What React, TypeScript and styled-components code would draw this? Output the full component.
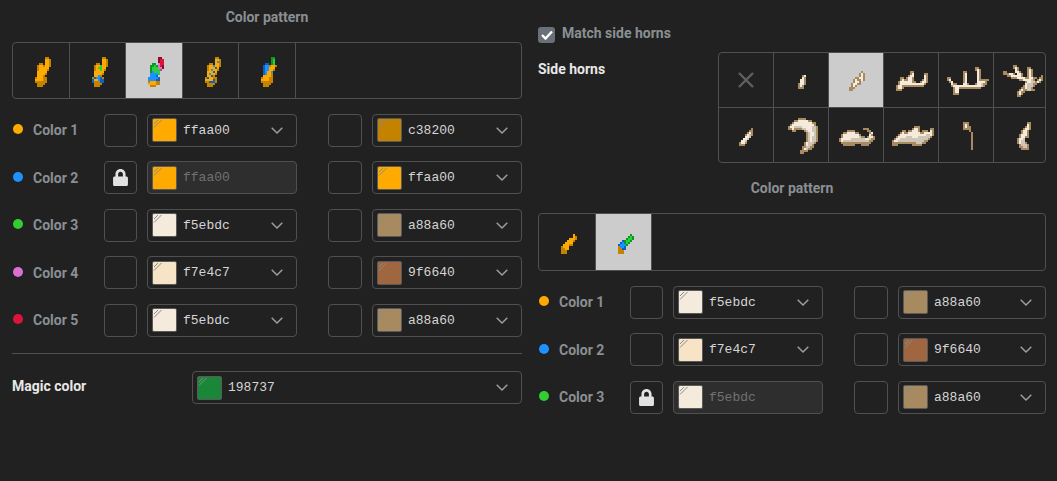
import React from 'react';
import styled, { createGlobalStyle } from 'styled-components';
import { FaLock } from 'react-icons/fa';

const GlobalStyle = createGlobalStyle`
  html, body {
    margin: 0;
    padding: 0;
    background: #212121;
  }
`;

// pixel art palette
const PALETTE: Record<string, string> = {
  o: '#ffaa00',
  d: '#c38200',
  b: '#1e90ff',
  B: '#0b62c4',
  g: '#2ecc40',
  G: '#0a9a1a',
  p: '#e070d0',
  P: '#a84aa0',
  r: '#dc143c',
  R: '#8f0a2c',
  l: '#f5ebdc',
  m: '#cfc6b8',
  a: '#a88a60',
};

interface SpriteData {
  dx: number;
  dy: number;
  rows: string[];
}

const PATTERN_HORNS: SpriteData[] = [
  {
    dx: 22,
    dy: 14,
    rows: [
      '.....dd.',
      '.....ood',
      '.....ood',
      '..dd.ood',
      '.doodood',
      '.dooooo.',
      '.dooood.',
      '.ooooo..',
      '.ooood..',
      '.oood...',
      'dooodd..',
      'oooodd..',
      'dddddd..',
      '.dddd...',
      '.ddd....',
    ],
  },
  {
    dx: 22,
    dy: 14,
    rows: [
      '.....dd.',
      '.....ood',
      '.....ood',
      '..dd.ood',
      '.doogood',
      '.doggoo.',
      '.doogod.',
      '.ooooo..',
      '.ooood..',
      '.oobd...',
      'dBbbBd..',
      'BoobBB..',
      'BdddBB..',
      '.dddd...',
      '.ddd....',
    ],
  },
  {
    dx: 22,
    dy: 14,
    rows: [
      '.....RR.',
      '.....Rrr',
      '.....Rrr',
      '..GG.prr',
      '.GGgGprR',
      '.GgggppR',
      '.GggggP.',
      '.Gbggg..',
      '.bbbbg..',
      '.bbbB...',
      'bbbbbB..',
      'bbbbBB..',
      'dooodd..',
      'oooodd..',
      '.ddd....',
    ],
  },
  {
    dx: 22,
    dy: 14,
    rows: [
      '.....dd.',
      '.....ood',
      '.....obd',
      '..dd.ood',
      '.doobood',
      '.doooBo.',
      '.dobood.',
      '.oooBo..',
      '.obood..',
      '.ooBd...',
      'dBoodd..',
      'ooooBd..',
      'ddBBBd..',
      '.dddd...',
      '.ddd....',
    ],
  },
  {
    dx: 22,
    dy: 14,
    rows: [
      '.....GG.',
      '.....Gg.',
      '.....Gg.',
      '..BB.Gg.',
      '.Bbbdood',
      '.Bbbooo.',
      '.Bbbood.',
      '.Bboob..',
      '.Bbood..',
      '.ooood..',
      'dooodd..',
      'oooodd..',
      'dddddd..',
      '.dddd...',
      '.ddd....',
    ],
  },
];

const SMALL_PATTERN_HORNS: SpriteData[] = [
  {
    dx: 22,
    dy: 20,
    rows: [
      '......o.',
      '......od',
      '....oood',
      '...oood.',
      '..oooo..',
      '.ooodd..',
      'dooo....',
      'ddoo....',
      'ddd.....',
      'ddd.....',
    ],
  },
  {
    dx: 22,
    dy: 20,
    rows: [
      '......G.',
      '.....GgG',
      '....GggG',
      '..BGggG.',
      '.BbGgG..',
      'BbbbG...',
      'dbbB....',
      'ddBB....',
      'ddd.....',
      'ddd.....',
    ],
  },
];

const SIDE_HORNS: (SpriteData | null)[] = [
  null,
  {
    dx: 24,
    dy: 22,
    rows: ['..al', '..la', '.lla', '.lla', 'alla', 'ala.', 'aaa.'],
  },
  {
    dx: 20,
    dy: 18,
    rows: [
      '......a.',
      '.....ala',
      '.....ala',
      '...aalla',
      '..alaala',
      '..alla..',
      '.allaa..',
      '.ala....',
      'aaa.....',
      'aa......',
    ],
  },
  {
    dx: 12,
    dy: 18,
    rows: [
      '.......aa.......',
      '.......al.....aa',
      '......all.....la',
      '..aa.alla.....la',
      '..alaalla....ala',
      '.allllllaa..alla',
      '.alllllllllllla.',
      'allaaaaaaaaaaa..',
      'alla............',
      'aaa.............',
    ],
  },
  {
    dx: 8,
    dy: 14,
    rows: [
      '..............aa.....',
      '..............ala....',
      '........aa.....la....',
      '........al.....la....',
      '........al.....la....',
      'aa......al.....la....',
      'al......al.....laaaaa',
      '.al.....al.....lllla.',
      '..laa...lla...allmaa.',
      '..allllllllllllllma..',
      '...allaaaaaaaaaaa....',
      '...all...............',
      '...all...............',
      '...aaa...............',
    ],
  },
  {
    dx: 8,
    dy: 12,
    rows: [
      '.....aa.............',
      '.....ala....aa......',
      '......la....ala.....',
      'aa....lla...ala.....',
      'aaalla.lla..ala.....',
      '..aallllla..ala....a',
      '....aaallllaallaa.aa',
      '........aallllma.ala',
      '...........allmmala.',
      '...........lmmmaa...',
      '..........almmma....',
      '.........aalmma.....',
      '........alaammaa....',
      '.......alaa.........',
      '.......ala..........',
      '.......aa...........',
    ],
  },
  {
    dx: 20,
    dy: 20,
    rows: [
      '......a',
      '.....aa',
      '....ala',
      '...alma',
      '...llm.',
      '..llm..',
      '.llm...',
      'alla...',
      'aaa....',
    ],
  },
  {
    dx: 14,
    dy: 10,
    rows: [
      '.....aaaa......',
      '...aalllllaa...',
      '..alllllllllaa.',
      '.allllllllllla.',
      'allmmmmlllllmma',
      'aalaaaammlllmma',
      '..aa....amllmma',
      '.........amllma',
      '.........amllma',
      '.........amlmma',
      '.........amlmma',
      '.........amlmma',
      '........almmma.',
      '........almma..',
      '.......aammaa..',
      '.......almaa...',
      '......aaaa.....',
      '......aa.......',
    ],
  },
  {
    dx: 10,
    dy: 20,
    rows: [
      '............aaa...',
      '....aaaa......aa..',
      '..aallllaa.....al.',
      '.alllllllla....la.',
      '.allllllllmaa.alla',
      'alllllmmmmmmmllmaa',
      'almmmmmmmmmmmmmaa.',
      '.aaaaaaaaaaaaaaa..',
      '..aaaaaa...aaaa...',
    ],
  },
  {
    dx: 8,
    dy: 18,
    rows: [
      '...........aaa.......',
      '..........alla.....aa',
      '.....aa.aallla.aaa.la',
      '....alaallllllaalllla',
      '...alllllllllllllmmla',
      '..allllmmmlllmmmmmma.',
      '.allmmmmmmmmmmmmmma..',
      'allmmmmmmmmmmmmmaa...',
      'aaaaaaaaaaaammmaa....',
      'aaa.......aaaaa......',
    ],
  },
  {
    dx: 24,
    dy: 14,
    rows: [
      'aaa..',
      'ala..',
      'alaa.',
      'aaaa.',
      '...a.',
      '....a',
      '....a',
      '....a',
      '....a',
      '....a',
      '....a',
      '....a',
      '....a',
      '....a',
    ],
  },
  {
    dx: 22,
    dy: 14,
    rows: [
      '.....aa',
      '.....la',
      '....ala',
      '...alla',
      '..alla.',
      '..alla.',
      '.allla.',
      '.allaa.',
      'allm...',
      'almm...',
      'almma..',
      '.ammma.',
      '.aamma.',
      '..aaaa.',
    ],
  },
];

const Sprite: React.FC<{ data: SpriteData; width: number; height: number }> = ({ data, width, height }) => (
  <svg width={width} height={height} viewBox={`0 0 ${width} ${height}`} shapeRendering="crispEdges">
    {data.rows.map((row, y) =>
      row.split('').map((ch, x) =>
        ch === '.' ? null : (
          <rect key={`${x}-${y}`} x={data.dx + x * 2} y={data.dy + y * 2} width={2} height={2} fill={PALETTE[ch]} />
        ),
      ),
    )}
  </svg>
);

const Page = styled.div`
  width: 1057px;
  height: 481px;
  box-sizing: border-box;
  padding: 9px 11px 0 12px;
  display: flex;
  gap: 16px;
  background: #212121;
  font-family: Roboto, 'Liberation Sans', sans-serif;
  overflow: hidden;
`;

const Column = styled.div<{ $width: number }>`
  width: ${(p) => p.$width}px;
  flex: none;
  display: flex;
  flex-direction: column;
`;

const Title = styled.div<{ $top?: number }>`
  height: 17px;
  line-height: 17px;
  margin-top: ${(p) => p.$top ?? 0}px;
  margin-bottom: 16px;
  font-size: 14px;
  font-weight: 700;
  color: #8a8f94;
  text-align: center;
`;

const CellGrid = styled.div<{ $cols: number; $cell: number }>`
  display: grid;
  grid-template-columns: repeat(${(p) => p.$cols}, ${(p) => p.$cell}px);
  border: 1px solid #505050;
  border-radius: 4px;
  overflow: hidden;
  box-sizing: border-box;
`;

const SpriteCell = styled.div<{ $selected?: boolean; $h: number; $right?: boolean; $bottom?: boolean }>`
  height: ${(p) => p.$h}px;
  box-sizing: border-box;
  display: flex;
  align-items: center;
  justify-content: center;
  background: ${(p) => (p.$selected ? '#cccccc' : 'transparent')};
  border-right: ${(p) => (p.$right ? '1px solid #505050' : 'none')};
  border-bottom: ${(p) => (p.$bottom ? '1px solid #505050' : 'none')};
`;

const RowList = styled.div`
  margin-top: 14px;
  display: flex;
  flex-direction: column;
  gap: 13.5px;
`;

const ColorRow = styled.div`
  display: flex;
  align-items: center;
  height: 34px;
`;

const ColorName = styled.div`
  width: 92px;
  flex: none;
  display: flex;
  align-items: center;
  gap: 10px;
  font-size: 14px;
  font-weight: 700;
  color: #8a8f94;
`;

const Dot = styled.span<{ $color: string }>`
  width: 10px;
  height: 10px;
  margin-left: 1px;
  margin-top: -2px;
  border-radius: 50%;
  background: ${(p) => p.$color};
`;

const Pair = styled.div`
  width: 193px;
  flex: none;
  display: flex;
  align-items: center;
  gap: 10px;

  & + & {
    flex: 1;
    margin-left: 31px;
  }
`;

const LockBox = styled.div<{ $wide?: boolean }>`
  width: ${(p) => (p.$wide ? 34 : 33)}px;
  height: 33px;
  flex: none;
  box-sizing: border-box;
  border: 1px solid #505050;
  border-radius: 4px;
  display: flex;
  align-items: center;
  justify-content: center;
  color: #e2e2e2;
  font-size: 17px;
`;

const SelectBox = styled.div<{ $disabled?: boolean }>`
  flex: 1;
  height: 33px;
  box-sizing: border-box;
  display: flex;
  align-items: center;
  gap: 6px;
  padding: 0 13px 0 4px;
  border: 1px solid #505050;
  border-radius: 4px;
  background: ${(p) => (p.$disabled ? '#2e2e2e' : 'transparent')};
`;

const Swatch = styled.div<{ $color: string }>`
  position: relative;
  width: 25px;
  height: 24px;
  flex: none;
  box-sizing: border-box;
  border: 1px solid #5a5a5a;
  border-radius: 2px;
  background: ${(p) => p.$color};
`;

const Shine = styled.svg`
  position: absolute;
  left: 0;
  top: 0;
`;

const HexCode = styled.span<{ $disabled?: boolean }>`
  flex: 1;
  font-family: 'Liberation Mono', monospace;
  font-size: 13px;
  color: ${(p) => (p.$disabled ? '#717171' : '#d5d5d5')};
`;

const Divider = styled.div`
  height: 1px;
  margin-top: 16px;
  background: #505050;
`;

const MagicRow = styled.div`
  display: flex;
  align-items: center;
  height: 33px;
  margin-top: 17px;
`;

const MagicLabel = styled.div`
  width: 180px;
  flex: none;
  margin-top: -4px;
  font-size: 14px;
  font-weight: 700;
  color: #e8e8e8;
`;

const CheckRow = styled.div`
  display: flex;
  align-items: flex-start;
  gap: 7px;
  height: 17px;
  margin-top: 16px;
  font-size: 14px;
  font-weight: 700;
  color: #8a8f94;
`;

const CheckBox = styled.div`
  width: 17px;
  height: 16px;
  margin-top: 2px;
  border-radius: 3px;
  background: #6a7078;
  display: flex;
  align-items: center;
  justify-content: center;
`;

const HornSection = styled.div`
  display: flex;
  margin-top: 10px;
`;

const HornLabel = styled.div`
  width: 180px;
  flex: none;
  padding-top: 9px;
  font-size: 14px;
  line-height: 17px;
  font-weight: 700;
  color: #e8e8e8;
`;

const Chevron = () => (
  <svg width="12" height="7" viewBox="0 0 12 7" fill="none">
    <polyline points="0.7,0.7 6,6 11.3,0.7" stroke="#a0a0a0" strokeWidth="1.4" />
  </svg>
);

const Glass = () => (
  <Shine width="12" height="12" viewBox="0 0 12 12" fill="none" stroke="#8a8a8a" strokeWidth="1">
    <line x1="1" y1="5" x2="5" y2="1" />
    <line x1="1" y1="8.5" x2="8.5" y2="1" />
  </Shine>
);

const ColorSelect: React.FC<{ color: string; disabled?: boolean }> = ({ color, disabled }) => (
  <SelectBox $disabled={disabled}>
    <Swatch $color={`#${color}`}>
      <Glass />
    </Swatch>
    <HexCode $disabled={disabled}>{color}</HexCode>
    {!disabled && <Chevron />}
  </SelectBox>
);

interface RowInfo {
  name: string;
  dot: string;
  main: string;
  shade: string;
  locked?: boolean;
}

const Row: React.FC<RowInfo> = ({ name, dot, main, shade, locked }) => (
  <ColorRow>
    <ColorName>
      <Dot $color={dot} />
      {name}
    </ColorName>
    <Pair>
      <LockBox>{locked && <FaLock />}</LockBox>
      <ColorSelect color={main} disabled={locked} />
    </Pair>
    <Pair>
      <LockBox $wide />
      <ColorSelect color={shade} />
    </Pair>
  </ColorRow>
);

const LEFT_ROWS: RowInfo[] = [
  { name: 'Color 1', dot: '#ffaa00', main: 'ffaa00', shade: 'c38200' },
  { name: 'Color 2', dot: '#1e90ff', main: 'ffaa00', shade: 'ffaa00', locked: true },
  { name: 'Color 3', dot: '#32cd32', main: 'f5ebdc', shade: 'a88a60' },
  { name: 'Color 4', dot: '#da70d6', main: 'f7e4c7', shade: '9f6640' },
  { name: 'Color 5', dot: '#dc143c', main: 'f5ebdc', shade: 'a88a60' },
];

const RIGHT_ROWS: RowInfo[] = [
  { name: 'Color 1', dot: '#ffaa00', main: 'f5ebdc', shade: 'a88a60' },
  { name: 'Color 2', dot: '#1e90ff', main: 'f7e4c7', shade: '9f6640' },
  { name: 'Color 3', dot: '#32cd32', main: 'f5ebdc', shade: 'a88a60', locked: true },
];

const App: React.FC = () => (
  <>
    <GlobalStyle />
    <Page>
      <Column $width={510}>
        <Title>Color pattern</Title>
        <CellGrid $cols={9} $cell={56.6}>
          {PATTERN_HORNS.map((horn, i) => (
            <SpriteCell key={i} $h={55} $right $selected={i === 2}>
              <Sprite data={horn} width={56} height={55} />
            </SpriteCell>
          ))}
        </CellGrid>
        <RowList>
          {LEFT_ROWS.map((row) => (
            <Row key={row.name} {...row} />
          ))}
        </RowList>
        <Divider />
        <MagicRow>
          <MagicLabel>Magic color</MagicLabel>
          <ColorSelect color="198737" />
        </MagicRow>
      </Column>
      <Column $width={508}>
        <CheckRow>
          <CheckBox>
            <svg width="12" height="10" viewBox="0 0 12 10" fill="none">
              <polyline points="1,5 4.5,8.5 11,1.5" stroke="#ffffff" strokeWidth="2.4" />
            </svg>
          </CheckBox>
          Match side horns
        </CheckRow>
        <HornSection>
          <HornLabel>Side horns</HornLabel>
          <CellGrid $cols={6} $cell={55}>
            {SIDE_HORNS.map((horn, i) => (
              <SpriteCell key={i} $h={i < 6 ? 55 : 54} $right={i % 6 !== 5} $bottom={i < 6} $selected={i === 2}>
                {horn ? (
                  <Sprite data={horn} width={54} height={54} />
                ) : (
                  <svg width="18" height="18" viewBox="0 0 18 18" fill="none">
                    <path d="M2 2 L16 16 M16 2 L2 16" stroke="#606060" strokeWidth="2.4" />
                  </svg>
                )}
              </SpriteCell>
            ))}
          </CellGrid>
        </HornSection>
        <Title $top={17}>Color pattern</Title>
        <CellGrid $cols={9} $cell={56.6}>
          {SMALL_PATTERN_HORNS.map((horn, i) => (
            <SpriteCell key={i} $h={56} $right $selected={i === 1}>
              <Sprite data={horn} width={56} height={56} />
            </SpriteCell>
          ))}
        </CellGrid>
        <RowList>
          {RIGHT_ROWS.map((row) => (
            <Row key={row.name} {...row} />
          ))}
        </RowList>
      </Column>
    </Page>
  </>
);

export default App;
